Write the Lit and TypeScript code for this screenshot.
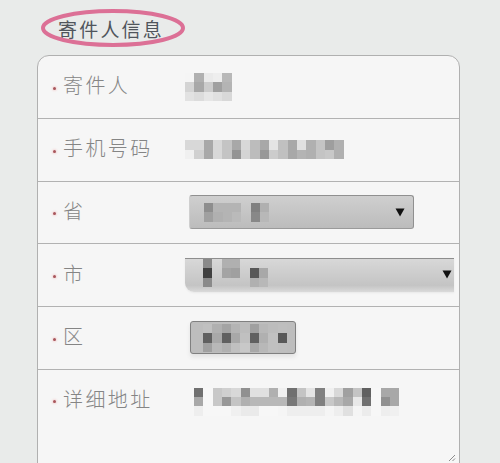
import { LitElement, html, css, svg } from "lit";
import { customElement, property } from "lit/decorators.js";

const CELL = 9.33;

@customElement("pixel-mosaic")
class PixelMosaic extends LitElement {
  @property({ attribute: false }) rows: string[] = [];
  static styles = css`
    :host { display: block; filter: blur(0.6px); }
    .grid { display: grid; }
    .cell { display: block; }
  `;
  render() {
    const cells = this.rows.map((r) => r.split(" "));
    const cols = cells[0].length;
    return html`<div
      class="grid"
      style="grid-template-columns: repeat(${cols}, ${CELL}px); grid-auto-rows: ${CELL}px"
    >
      ${cells.flat().map((c) =>
        html`<span class="cell" style=${c === "--" ? "" : `background:#${c}${c}${c}`}></span>`
      )}
    </div>`;
  }
}

const arrow = html`<svg class="arrow" width="10" height="9" viewBox="0 0 10 9">
  <path d="M0.5 0.5H9.5L5 8.5Z" fill="#111"></path>
</svg>`;

const ring = svg`<ellipse cx="72" cy="19" rx="70" ry="17" fill="none" stroke="#dc7096" stroke-width="4"></ellipse>`;

@customElement("app-root")
class AppRoot extends LitElement {
  static styles = css`
    :host {
      display: block;
      width: 500px;
      height: 463px;
      overflow: hidden;
      background: #e9ebea;
      font-family: "Noto Sans CJK SC", "Noto Sans", sans-serif;
    }
    .header {
      position: relative;
      height: 55px;
      box-sizing: border-box;
      padding-left: 58px;
      padding-top: 1px;
      display: flex;
      align-items: center;
      font-size: 19px;
      letter-spacing: 2.2px;
      font-weight: 400;
      color: #50555c;
    }
    .ring { position: absolute; left: 41px; top: 9px; filter: blur(0.4px); }
    .card {
      margin-left: 37px;
      width: 423px;
      box-sizing: border-box;
      background: #f6f6f6;
      border: 1.5px solid #b0b0b0;
      border-radius: 12px 12px 0 0;
    }
    .row {
      height: 62.75px;
      box-sizing: border-box;
      display: flex;
      align-items: center;
      padding-left: 15px;
      border-bottom: 1.5px solid #b2b2b2;
    }
    .row.multi {
      position: relative;
      height: 100px;
      align-items: flex-start;
      padding-top: 18px;
      border-bottom: none;
    }
    .dot {
      width: 3px;
      height: 3px;
      border-radius: 50%;
      background: #a8565c;
      box-shadow: 0 0 2px 1px #f3d9d9;
      flex: none;
      margin-right: 7px;
      margin-top: 3px;
    }
    .multi .dot { margin-top: 12px; }
    .label {
      width: 122px;
      flex: none;
      font-size: 20px;
      font-weight: 300;
      letter-spacing: 2.4px;
      color: #858585;
      line-height: 28px;
      margin-bottom: 3px;
    }
    .multi .label { margin-top: -3px; }
    .select {
      display: flex;
      justify-content: space-between;
      box-sizing: border-box;
      height: 34px;
      filter: blur(0.3px);
    }
    .s1 {
      margin-left: 4px;
      width: 225px;
      align-items: center;
      padding: 0 8px 0 14px;
      border: 1.5px solid #909090;
      border-left-color: #cfcfcf;
      border-bottom-color: #9a9a9a;
      border-radius: 3px;
      background: linear-gradient(#cfcfcf, #bcbcbc);
    }
    .s2 {
      width: 269px;
      align-items: flex-start;
      padding: 0 2px 0 18px;
      border-top: 1.5px solid #8e8e8e;
      border-radius: 0 0 0 9px;
      background: linear-gradient(#d8d8d8, #c4c4c4 80%, #dadada);
      box-shadow: 0 1px 2px #e8e8e8;
    }
    .s2 .arrow { margin-top: 11px; }
    .s3 {
      margin-left: 5px;
      width: 106px;
      height: 33px;
      align-items: center;
      padding-left: 12px;
      border: 1.5px solid #808080;
      border-radius: 3px;
      background: #bdbdbd;
      box-shadow: 0 3px 4px #e2e2e2;
    }
    .note { margin-left: 9px; margin-top: 0; }
    .grip { position: absolute; right: 3px; bottom: 8px; }
  `;

  render() {
    return html`
      <div class="header">
        <svg class="ring" width="146" height="38" viewBox="0 0 146 38">${ring}</svg>
        <span>寄件人信息</span>
      </div>
      <div class="card">
        <div class="row">
          <i class="dot"></i><span class="label">寄件人</span>
          <pixel-mosaic
            .rows=${["f5 b0 ea ee b8", "d4 a8 cc a0 b4", "e2 dc e6 e0 d8"]}
          ></pixel-mosaic>
        </div>
        <div class="row">
          <i class="dot"></i><span class="label">手机号码</span>
          <pixel-mosaic
            .rows=${[
              "d8 d8 a8 d8 c4 a8 d8 bc a8 e4 c0 a8 e0 b0 c4 9e b0",
              "f0 d0 a8 d8 c4 94 d4 bc 98 cc c0 a8 b4 b0 c4 c8 b0",
            ]}
          ></pixel-mosaic>
        </div>
        <div class="row">
          <i class="dot"></i><span class="label">省</span>
          <div class="select s1">
            <pixel-mosaic
              .rows=${["8e b4 b4 b4 -- 80 b0", "a0 b0 b4 ba -- 88 b8"]}
            ></pixel-mosaic>
            ${arrow}
          </div>
        </div>
        <div class="row">
          <i class="dot"></i><span class="label">市</span>
          <div class="select s2">
            <pixel-mosaic
              .rows=${["8a -- b0 b0 -- -- --", "40 -- a4 a0 -- 58 a8", "8a -- -- -- -- b0 b8"]}
            ></pixel-mosaic>
            ${arrow}
          </div>
        </div>
        <div class="row">
          <i class="dot"></i><span class="label">区</span>
          <div class="select s3">
            <pixel-mosaic
              .rows=${[
                "c0 b0 a4 b4 bc a0 b8 bc be",
                "60 a8 60 a8 c0 60 b0 c0 58",
                "a0 b8 b0 c0 c8 a8 b8 c0 be",
              ]}
            ></pixel-mosaic>
          </div>
        </div>
        <div class="row multi">
          <i class="dot"></i><span class="label">详细地址</span>
          <pixel-mosaic
            class="note"
            .rows=${[
              "70 f7 c8 d0 d8 90 e0 e0 b0 f0 70 c4 e4 80 f0 d8 a0 c4 60 f7 a8 a8",
              "a8 f7 c8 98 c4 b0 b8 b8 b8 b8 78 b0 b4 80 c8 b8 a8 e8 70 f7 90 a8",
              "ee f7 f7 f7 f0 ea ea f7 f7 f5 ee ee ee ee f5 ee e0 f5 ec f7 ee f0",
            ]}
          ></pixel-mosaic>
          <svg class="grip" width="8" height="8" viewBox="0 0 8 8">
            <path d="M1 7L7 1M4.5 7L7 4.5" stroke="#8c8c8c" stroke-width="1" fill="none"></path>
          </svg>
        </div>
      </div>
    `;
  }
}
